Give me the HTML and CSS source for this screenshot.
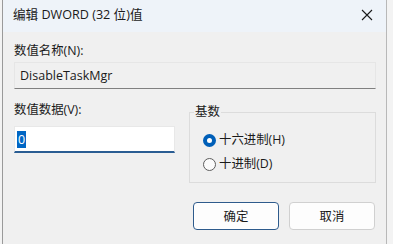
FILE: index.html
```html
<!DOCTYPE html>
<html lang="zh">
<head>
<meta charset="utf-8">
<link rel="stylesheet" href="styles.css">
</head>
<body>
<div class="dialog">
  <div class="titlebar">
    <span class="title">编辑 DWORD (32 位)值</span>
    <span class="close">
      <svg width="12" height="12" viewBox="0 0 12 12"><path d="M1 1L11 11M11 1L1 11" stroke="#1a1a1a" stroke-width="1.1" fill="none"/></svg>
    </span>
  </div>
  <div class="content">
    <div class="label">数值名称(N):</div>
    <div class="field readonly"><span class="latin">DisableTaskMgr</span></div>
    <div class="row">
      <div class="col-left">
        <div class="label">数值数据(V):</div>
        <div class="field edit"><span class="sel latin">0</span></div>
      </div>
      <fieldset class="group">
        <legend>基数</legend>
        <label class="radio"><span class="dot checked"></span><span>十六进制(H)</span></label>
        <label class="radio"><span class="dot"></span><span>十进制(D)</span></label>
      </fieldset>
    </div>
    <div class="buttons">
      <button class="btn primary">确定</button>
      <button class="btn">取消</button>
    </div>
  </div>
</div>
</body>
</html>
```

FILE: styles.css
```css
html, body {
  margin: 0;
  padding: 0;
}
body {
  background: #f3f3f3;
  width: 393px;
  height: 244px;
  overflow: hidden;
  font-family: "Open Sans", "Noto Sans CJK SC", sans-serif;
  font-size: 12.4px;
  color: #1a1a1a;
  padding-left: 2px;
  box-sizing: border-box;
}
.dialog {
  width: 385px;
  height: 244px;
  box-sizing: border-box;
  border-left: 1px solid #9a9a9a;
  border-right: 1px solid #b8b8b8;
  background: #f0f0f0;
  display: flex;
  flex-direction: column;
}
.titlebar {
  height: 32px;
  background: #eef3f9;
  display: flex;
  align-items: center;
  justify-content: space-between;
  padding: 0 10px 0 10px;
  flex: none;
}
.title {
  font-size: 12.6px;
  line-height: 16px;
  margin-top: -2px;
}
.close {
  display: flex;
  width: 12px;
  height: 12px;
  margin-right: 3px;
  margin-top: -3px;
}
.content {
  padding: 11px 10px 0 11px;
  display: flex;
  flex-direction: column;
}
.label {
  line-height: 16px;
  height: 16px;
}
.latin {
  font-family: "Open Sans", "Noto Sans", sans-serif;
  font-size: 12.5px;
}
.field {
  box-sizing: border-box;
  height: 27px;
  display: flex;
  align-items: center;
  padding-left: 5px;
}
.readonly {
  margin-top: 3px;
  border: 1px solid #e6e6e6;
  border-bottom: 1px solid #808080;
  background: #f0f0f0;
}
.row {
  display: grid;
  grid-template-columns: 161px 1fr;
  column-gap: 14px;
  margin-top: 13px;
}
.col-left {
  display: flex;
  flex-direction: column;
}
.edit {
  margin-top: 8px;
  background: #ffffff;
  border: 1px solid #e8e8e8;
  border-bottom: 2px solid #2a5d93;
  padding-left: 2px;
  height: 27px;
}
.sel {
  background: #0066c4;
  color: #ffffff;
  padding: 0 1px;
  line-height: 17px;
}
.group {
  margin: 3px 0 0 0;
  padding: 13px 0 0 13px;
  border: 1px solid #dcdcdc;
  height: 78px;
  box-sizing: border-box;
  display: flex;
  flex-direction: column;
  gap: 8px;
}
.group legend {
  padding: 0 1px;
  margin-left: -9px;
  line-height: 14px;
}
.radio {
  display: flex;
  align-items: center;
  gap: 3px;
  line-height: 16px;
}
.dot {
  width: 13px;
  height: 13px;
  box-sizing: border-box;
  border-radius: 50%;
  border: 1px solid #5d5d5d;
  background: #fbfbfb;
}
.dot.checked {
  border: 4px solid #005fb8;
  background: #ffffff;
}
.buttons {
  display: flex;
  justify-content: flex-end;
  gap: 10px;
  margin-top: 19px;
  padding-right: 1px;
}
.btn {
  width: 86px;
  height: 28px;
  box-sizing: border-box;
  font-family: "Open Sans", "Noto Sans CJK SC", sans-serif;
  font-size: 12.4px;
  color: #1a1a1a;
  background: #fdfdfd;
  border: 1px solid #d0d0d0;
  border-radius: 4px;
  padding: 0;
}
.btn.primary {
  border: 1px solid #2e5b8c;
  box-shadow: inset 0 0 0 1px #ffffff;
}
```
